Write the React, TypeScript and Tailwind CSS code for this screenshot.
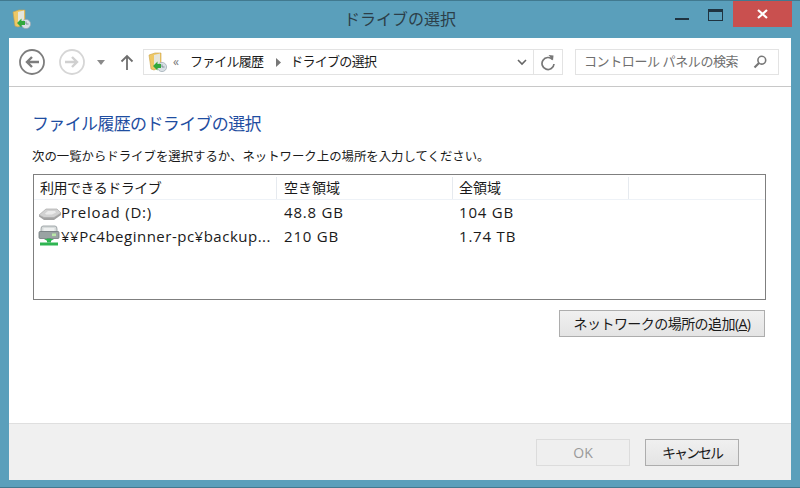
const jp = "font-['Open_Sans','Noto_Sans_CJK_JP',sans-serif]";

function HistoryIcon({ size = 20 }: { size?: number }) {
  return (
    <svg width={size} height={size} viewBox="0 0 20 20" className="shrink-0">
      <path d="M1 3 L7 1 L13 1 L13 15 L6 18 L3 17 Z" fill="#efc865" stroke="#c9a24a" strokeWidth="0.6" />
      <path d="M6 3 L12 1.5 L12 13 L6 15 Z" fill="#e6e6dc" />
      <circle cx="14" cy="15" r="4.6" fill="#d8dfe4" stroke="#9aa7b0" strokeWidth="0.7" />
      <path d="M14 12.5 V15 H16.5" fill="none" stroke="#6d7b85" strokeWidth="0.8" />
      <path d="M5 14 L9.5 9.5 V12 H13 V16 H9.5 V18.5 Z" fill="#31a83c" />
    </svg>
  );
}

function DiskIcon() {
  return (
    <svg width="24" height="16" viewBox="0 0 24 16" className="shrink-0">
      <path d="M1 10 L8 4 H19 L23 8 L16 12.5 H6 Z" fill="#d2d2d2" stroke="#aaaaaa" strokeWidth="0.7" />
      <path d="M1 10 V11.5 L6 15 H16 L23 10 V8 L16 12.5 H6 Z" fill="#a2a2a2" />
      <path d="M7 8.5 L10 6 H17 L18 7.5 L14 9.5 H8 Z" fill="#ebebeb" />
    </svg>
  );
}

function NetDriveIcon() {
  return (
    <svg width="24" height="24" viewBox="0 0 24 24" className="shrink-0">
      <path d="M4 5 Q4 2 6 2 H18 Q20 2 20 5 V8 H4 Z" fill="#d8dcdc" stroke="#90979a" strokeWidth="0.8" />
      <path d="M6.5 4 H17.5 V7 H6.5 Z" fill="#eef0f0" />
      <rect x="2" y="7.5" width="20" height="7" rx="1" fill="#9aa3a3" stroke="#717a7c" strokeWidth="0.8" />
      <rect x="15" y="9.5" width="4" height="2.6" fill="#b9e8a8" />
      <rect x="10" y="14.5" width="4" height="4" fill="#2fb552" />
      <path d="M7 15 H17 L12 18 Z" fill="#2fb552" />
      <rect x="3" y="18.5" width="18" height="3" fill="#2fb552" />
    </svg>
  );
}

function Button({ label, disabled, wide, narrow }: { label: React.ReactNode; disabled?: boolean; wide?: boolean; narrow?: boolean }) {
  return (
    <div
      className={`flex h-[27px] items-center justify-center border text-[14px] ${
        wide ? "w-[206px] tracking-[-0.55px]" : "w-[94px]"
      } ${narrow ? "tracking-[-2px]" : ""} ${
        disabled
          ? "border-[#dcdcdc] bg-[#efefef] text-[#9a9a9a]"
          : "border-[#adadad] bg-gradient-to-b from-[#f0f0f0] to-[#e4e4e4] text-[#1a1a1a]"
      }`}
    >
      {label}
    </div>
  );
}

export default function App() {
  return (
    <div className={`flex h-[488px] w-[800px] flex-col overflow-hidden border-t border-[#41798f] bg-[#5a9fbb] ${jp} text-[#1a1a1a]`}>
      {/* title bar */}
      <div className="relative flex h-[37px] shrink-0 items-center pl-[12px]">
        <div className="mb-[2px]"><HistoryIcon /></div>
        <div className="flex-1 pb-[2px] pr-[32px] text-center text-[16px] text-[#2c3e48]">ドライブの選択</div>
        <div className="absolute right-[8px] top-0 flex items-start">
          <div className="mr-[19px] mt-[17px] h-[2px] w-[14px] bg-[#1f3340]" />
          <div className="mr-[10px] mt-[8px] h-[12px] w-[15px] border border-t-[3px] border-[#1f3340]" />
          <div className="flex h-[26px] w-[59px] items-center justify-center bg-[#c9504f]">
            <svg width="11" height="10" viewBox="0 0 11 10"><path d="M1 1 L10 9 M10 1 L1 9" stroke="#fff" strokeWidth="2.2" /></svg>
          </div>
        </div>
      </div>

      {/* client area */}
      <div className="mx-[9px] flex min-h-0 flex-1 flex-col bg-white">
        <div className="flex h-[49px] shrink-0 items-center border-b border-[#c8c8c8] pl-[10px]">
          <svg width="28" height="28" viewBox="0 0 28 28" className="shrink-0">
            <circle cx="13" cy="14" r="12" fill="none" stroke="#7d7d7d" strokeWidth="1.8" />
            <path d="M20 14 H8 M13 9 L8 14 L13 19" fill="none" stroke="#7d7d7d" strokeWidth="2.4" />
          </svg>
          <svg width="28" height="28" viewBox="0 0 28 28" className="ml-[12px] shrink-0">
            <circle cx="13" cy="14" r="12" fill="none" stroke="#d6d6d6" strokeWidth="1.8" />
            <path d="M6 14 H18 M13 9 L18 14 L13 19" fill="none" stroke="#d0d0d0" strokeWidth="2.4" />
          </svg>
          <svg width="8" height="5" viewBox="0 0 8 5" className="ml-[10px] shrink-0"><path d="M0 0 H8 L4 5 Z" fill="#8a8a8a" /></svg>
          <svg width="14" height="16" viewBox="0 0 14 16" className="ml-[15px] shrink-0">
            <path d="M7 16 V2 M1.5 7.5 L7 2 L12.5 7.5" fill="none" stroke="#6e6e6e" strokeWidth="1.8" />
          </svg>
          {/* address bar */}
          <div className="ml-[9px] flex h-[26px] w-[420px] shrink-0 items-center border border-[#e3e3e3] text-[13px] text-[#1a1a1a]">
            <div className="ml-[4px]"><HistoryIcon /></div>
            <span className="ml-[5px] text-[12px] leading-none text-[#777]">«</span>
            <span className="ml-[11px] tracking-[-0.8px]">ファイル履歴</span>
            <svg width="5" height="9" viewBox="0 0 5 9" className="ml-[13px]"><path d="M0 0 L5 4.5 L0 9 Z" fill="#777" /></svg>
            <span className="ml-[9px] tracking-[-0.7px]">ドライブの選択</span>
            <svg width="10" height="7" viewBox="0 0 10 7" className="ml-auto mr-[6px]"><path d="M1 1 L5 5 L9 1" fill="none" stroke="#666" strokeWidth="1.6" /></svg>
            <div className="flex h-full w-[29px] items-center justify-center border-l border-[#e3e3e3]">
              <svg width="16" height="17" viewBox="0 0 16 17">
                <path d="M12.5 5.5 A6 6 0 1 0 14 10" fill="none" stroke="#777" strokeWidth="1.7" />
                <path d="M8.5 1 L13.5 1.5 L13 6.5 Z" fill="#777" />
              </svg>
            </div>
          </div>
          {/* search box */}
          <div className="ml-[12px] flex h-[26px] w-[204px] shrink-0 items-center border border-[#e3e3e3] pl-[8px] text-[13px] tracking-[-0.4px] text-[#6f6f6f]">
            <span>コントロール パネルの検索</span>
            <svg width="14" height="14" viewBox="0 0 14 14" className="ml-auto mr-[11px]">
              <circle cx="8.8" cy="5.2" r="3.9" fill="none" stroke="#777" strokeWidth="1.6" />
              <path d="M6 8 L1.5 12.5" stroke="#777" strokeWidth="2.2" />
            </svg>
          </div>
        </div>

        {/* body */}
        <div className="flex min-h-0 flex-1 flex-col px-[24px]">
          <h1 className="-ml-[1px] mt-[25px] text-[17px] leading-[24px] tracking-[-0.65px] text-[#1f4ea1]">ファイル履歴のドライブの選択</h1>
          <p className="-ml-[1px] mt-[11px] text-[12.4px] leading-[20px]">次の一覧からドライブを選択するか、ネットワーク上の場所を入力してください。</p>
          <div className="mt-[7px] h-[126px] w-[733px] border border-[#7f7f7f] text-[15px] tracking-[0.8px]">
            <div className="flex h-[25px] items-center border-b border-[#eef2f7] pt-[2px] text-[14px] leading-none tracking-normal">
              <div className="flex h-full w-[243px] items-center border-r border-[#e6eaef] pl-[6px] tracking-[-0.5px]">利用できるドライブ</div>
              <div className="flex h-full w-[176px] items-center border-r border-[#e6eaef] pl-[7px]">空き領域</div>
              <div className="flex h-full w-[176px] items-center border-r border-[#e6eaef] pl-[6px]">全領域</div>
            </div>
            <div className="flex h-[25px] items-center">
              <div className="flex w-[243px] items-center pl-[4px]"><DiskIcon /><span className="ml-[-1px]">Preload (D:)</span></div>
              <div className="w-[176px] pl-[7px]">48.8 GB</div>
              <div className="pl-[6px]">104 GB</div>
            </div>
            <div className="flex h-[22px] items-center">
              <div className="flex w-[243px] items-center pl-[3px]"><NetDriveIcon /><span className="whitespace-nowrap tracking-[0.5px]">¥¥Pc4beginner-pc¥backup...</span></div>
              <div className="w-[176px] pl-[7px]">210 GB</div>
              <div className="pl-[6px]">1.74 TB</div>
            </div>
          </div>
          <div className="mt-[10px] flex justify-end pr-[2px]">
            <Button wide label={<span>ネットワークの場所の追加(<span className="underline">A</span>)</span>} />
          </div>
        </div>

        {/* footer */}
        <div className="flex h-[57px] shrink-0 items-center justify-end gap-[15px] border-t border-[#dfdfdf] bg-[#f0f0f0] pr-[52px]">
          <Button disabled label="OK" />
          <Button narrow label="キャンセル" />
        </div>
      </div>
      <div className="h-[8px] shrink-0 border-b border-[#41798f]" />
    </div>
  );
}
